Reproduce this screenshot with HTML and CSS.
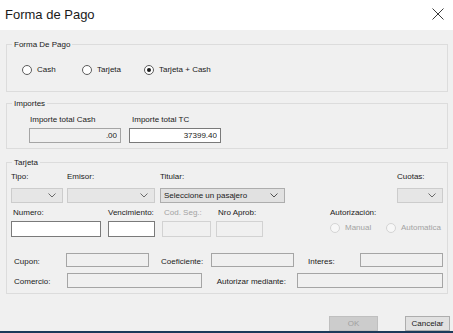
FILE: index.html
```html
<!DOCTYPE html>
<html lang="es">
<head>
    <meta charset="UTF-8">
    <title>Forma de Pago</title>
    <link rel="stylesheet" href="styles.css">
</head>
<body>
    <div class="window">
        <div class="titlebar">
            <span class="title">Forma de Pago</span>
            <svg class="close" width="12" height="12" viewBox="0 0 12 12">
                <path d="M0.5 0.5 L11.5 11.5 M11.5 0.5 L0.5 11.5" stroke="#3a3a3a" stroke-width="1" fill="none"/>
            </svg>
        </div>

        <div class="content">
            <!-- forma de pago -->
            <div class="group group-forma">
                <span class="group-title">Forma De Pago</span>
                <div class="radios">
                    <label class="radio radio-cash"><span class="dot"></span>Cash</label>
                    <label class="radio radio-tarjeta"><span class="dot"></span>Tarjeta</label>
                    <label class="radio"><span class="dot checked"></span>Tarjeta + Cash</label>
                </div>
            </div>

            <!-- importes -->
            <div class="group group-importes">
                <span class="group-title">Importes</span>
                <div class="importes-row">
                    <div class="field">
                        <span class="lbl lbl-cash">Importe total Cash</span>
                        <input class="box box-num box-off" value=".00" readonly>
                    </div>
                    <div class="field">
                        <span class="lbl lbl-tc">Importe total TC</span>
                        <input class="box box-num" value="37399.40" readonly>
                    </div>
                </div>
            </div>

            <!-- tarjeta -->
            <div class="group group-tarjeta">
                <span class="group-title">Tarjeta</span>

                <div class="row row-combos">
                    <div class="field w-tipo">
                        <span class="lbl">Tipo:</span>
                        <div class="combo"><span></span><svg width="8" height="5" viewBox="0 0 8 5"><path d="M0.5 0.5 L4 4 L7.5 0.5" stroke="#6a6a6a" fill="none"/></svg></div>
                    </div>
                    <div class="field w-emisor">
                        <span class="lbl">Emisor:</span>
                        <div class="combo"><span></span><svg width="8" height="5" viewBox="0 0 8 5"><path d="M0.5 0.5 L4 4 L7.5 0.5" stroke="#6a6a6a" fill="none"/></svg></div>
                    </div>
                    <div class="field w-titular">
                        <span class="lbl">Titular:</span>
                        <div class="combo combo-on"><span>Seleccione un pasajero</span><svg width="8" height="5" viewBox="0 0 8 5"><path d="M0.5 0.5 L4 4 L7.5 0.5" stroke="#505050" fill="none"/></svg></div>
                    </div>
                    <div class="field w-cuotas">
                        <span class="lbl">Cuotas:</span>
                        <div class="combo"><span></span><svg width="8" height="5" viewBox="0 0 8 5"><path d="M0.5 0.5 L4 4 L7.5 0.5" stroke="#6a6a6a" fill="none"/></svg></div>
                    </div>
                </div>

                <div class="row row-datos">
                    <div class="field w-numero">
                        <span class="lbl lbl-in">Numero:</span>
                        <input class="box box-tall">
                    </div>
                    <div class="field w-venc">
                        <span class="lbl">Vencimiento:</span>
                        <input class="box box-tall">
                    </div>
                    <div class="field w-codseg">
                        <span class="lbl lbl-in disabled">Cod. Seg.:</span>
                        <input class="box box-tall box-dis" readonly>
                    </div>
                    <div class="field w-aprob">
                        <span class="lbl lbl-in">Nro Aprob:</span>
                        <input class="box box-tall box-dis" readonly>
                    </div>
                    <div class="field w-autoriz">
                        <span class="lbl">Autorización:</span>
                        <div class="radios-small">
                            <label class="radio disabled radio-manual"><span class="dot dot-dis"></span>Manual</label>
                            <label class="radio disabled"><span class="dot dot-dis"></span>Automatica</label>
                        </div>
                    </div>
                </div>

                <div class="line line-cupon">
                    <span class="lbl side w-l1">Cupon:</span>
                    <input class="box box-off w-83" readonly>
                    <span class="lbl side w-l2">Coeficiente:</span>
                    <input class="box box-off w-83" readonly>
                    <span class="lbl side w-l3">Interes:</span>
                    <input class="box box-off w-83" readonly>
                </div>

                <div class="line line-comercio">
                    <span class="lbl side w-l1">Comercio:</span>
                    <input class="box box-off box-15 w-136" readonly>
                    <span class="lbl side w-l4">Autorizar mediante:</span>
                    <input class="box box-off box-15 w-147" readonly>
                </div>
            </div>

            <div class="buttons">
                <button class="btn btn-ok" disabled>OK</button>
                <button class="btn btn-cancel">Cancelar</button>
            </div>
        </div>
        <div class="taskbar"></div>
    </div>
</body>
</html>
```

FILE: styles.css
```css
* {
    margin: 0;
    padding: 0;
    box-sizing: border-box;
}

body {
    font-family: 'Liberation Sans', Arial, sans-serif;
    font-size: 8px;
    color: #1a1a1a;
    background: #f0f0f0;
    width: 453px;
    height: 333px;
    overflow: hidden;
}

.window {
    width: 453px;
    height: 333px;
    display: flex;
    flex-direction: column;
}

.titlebar {
    height: 30px;
    background: #ffffff;
    display: flex;
    align-items: center;
    justify-content: space-between;
    padding: 0 9px 2px 5px;
}

.title {
    font-size: 13px;
    color: #1a1a1a;
}

.close {
    display: block;
}

.content {
    flex: 1;
    padding: 0 5px 0 6px;
}

/* group boxes */
.group {
    position: relative;
    border: 1px solid #dcdcdc;
}

.group-title {
    position: absolute;
    top: -6px;
    left: 5px;
    padding: 0 2px;
    background: #f0f0f0;
    line-height: 11px;
}

.group-forma {
    margin-top: 14px;
    height: 48px;
}

.group-importes {
    margin-top: 11px;
    height: 46px;
}

.group-tarjeta {
    margin-top: 13px;
    height: 132px;
    padding: 8px 4px 0 4px;
}

/* radios */
.radios {
    display: flex;
    padding: 19px 0 0 15px;
}

.radio {
    display: flex;
    align-items: center;
    gap: 5px;
    line-height: 11px;
}

.radio-cash {
    width: 60px;
}

.radio-tarjeta {
    width: 62px;
}

.dot {
    width: 10px;
    height: 10px;
    border-radius: 50%;
    border: 1px solid #5c5c5c;
    background: #ffffff;
    position: relative;
}

.dot.checked::after {
    content: '';
    position: absolute;
    top: 2px;
    left: 2px;
    width: 4px;
    height: 4px;
    border-radius: 50%;
    background: #1a1a1a;
}

.dot-dis {
    border-color: #d4d4d4;
    background: #f7f7f7;
}

.disabled {
    color: #a3a3a3;
}

/* fields */
.lbl {
    line-height: 11px;
    white-space: nowrap;
}

.field {
    display: flex;
    flex-direction: column;
}

.importes-row {
    display: flex;
    gap: 8px;
    padding: 10px 0 0 22px;
}

.importes-row .field {
    width: 92px;
}

.lbl-cash {
    padding-left: 1px;
    margin-bottom: 3px;
}

.lbl-tc {
    padding-left: 3px;
    margin-bottom: 3px;
}

.box {
    display: block;
    width: 100%;
    height: 15px;
    border: 1px solid #7a7a7a;
    background: #ffffff;
    font: inherit;
    color: #1a1a1a;
    outline: none;
}

.box-num {
    text-align: right;
    padding-right: 3px;
}

.box-off {
    background: #f0f0f0;
    border-color: #a5a5a5;
}

.box-dis {
    background: #f0f0f0;
    border-color: #d2d2d2;
}

.box-tall {
    height: 16px;
}

.box-15 {
    height: 15px;
}

/* combos */
.combo {
    height: 15px;
    margin-top: 6px;
    border: 1px solid #cccccc;
    background: #e6e6e6;
    display: flex;
    align-items: center;
    justify-content: space-between;
    padding: 0 6px 0 3px;
}

.combo-on {
    border-color: #adadad;
    background: #e1e1e1;
}

.combo svg {
    display: block;
}

.row {
    display: flex;
}

.w-tipo {
    width: 52px;
}

.w-emisor {
    width: 88px;
    margin-left: 4px;
}

.w-titular {
    width: 125px;
    margin-left: 5px;
}

.w-cuotas {
    width: 46px;
    margin-left: auto;
}

.row-datos {
    margin-top: 4px;
}

.row-datos .lbl {
    margin-bottom: 3px;
}

.lbl-in {
    padding-left: 2px;
}

.w-numero {
    width: 90px;
}

.w-venc {
    width: 47px;
    margin-left: 7px;
}

.w-codseg {
    width: 49px;
    margin-left: 7px;
}

.w-aprob {
    width: 47px;
    margin-left: 5px;
}

.w-autoriz {
    margin-left: 67px;
}

.radios-small {
    display: flex;
    margin-top: 1px;
}

.radio-manual {
    width: 56px;
}

/* bottom lines */
.line {
    display: flex;
    align-items: center;
    padding-left: 3px;
}

.line-cupon {
    margin-top: 16px;
}

.line-cupon .box {
    height: 14px;
}

.line-comercio {
    margin-top: 6px;
}

.side {
    padding-top: 2px;
}

.w-l1 {
    width: 53px;
}

.w-l2 {
    width: 51px;
    margin-left: 12px;
}

.w-l3 {
    width: 53px;
    margin-left: 14px;
}

.w-l4 {
    width: 81px;
    margin-left: 15px;
}

.w-83 {
    width: 83px;
}

.w-136 {
    width: 136px;
}

.w-147 {
    width: 147px;
}

/* buttons */
.buttons {
    display: flex;
    justify-content: flex-end;
    gap: 27px;
    margin-top: 22px;
}

.btn {
    height: 15px;
    font: inherit;
    border: 1px solid #adadad;
    background: #e1e1e1;
    color: #1a1a1a;
}

.btn-ok {
    width: 49px;
    background: #cccccc;
    border-color: #bfbfbf;
    color: #a0a0a0;
}

.btn-cancel {
    width: 45px;
    margin-right: -2px;
}

.taskbar {
    height: 2px;
    background: #1c3a5a;
}
```
